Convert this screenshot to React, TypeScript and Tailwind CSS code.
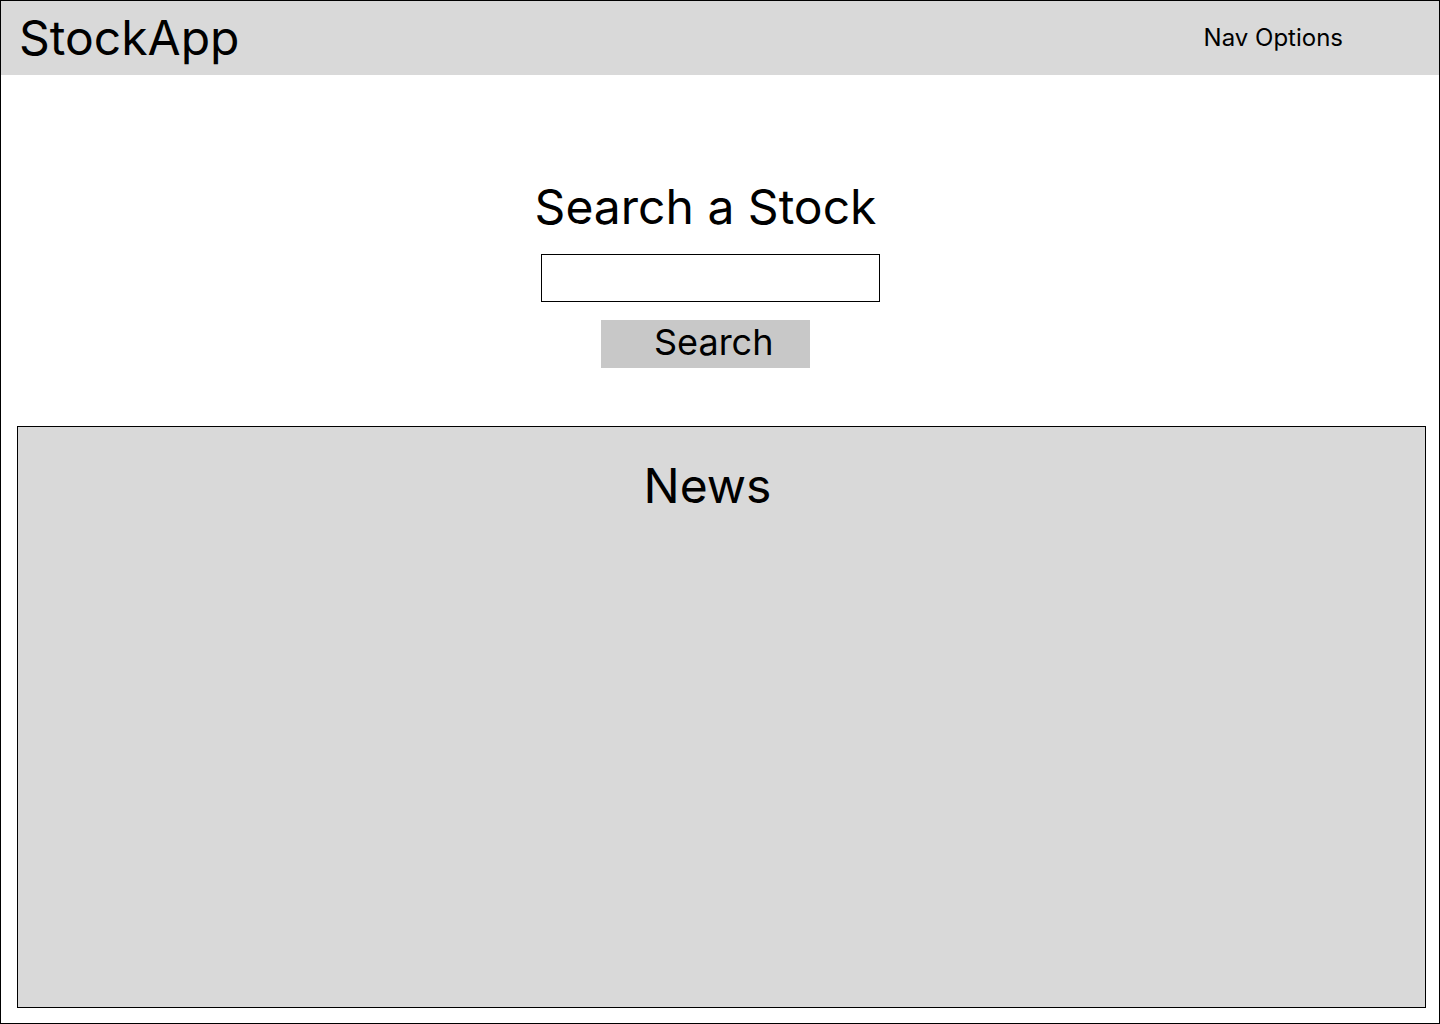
import React from 'react';

const font = { fontFamily: 'Inter, "Noto Sans", sans-serif' };

export default function App() {
    return (
        <div
            className="w-[1440px] h-[1024px] border border-black bg-white flex flex-col text-black"
            style={font}
        >
            {/* Header */}
            <header className="h-[74px] bg-[#d9d9d9] flex items-center justify-between pl-[18px] pr-[96px]">
                <div className="text-[48px] leading-[58px]">StockApp</div>
                <nav className="text-[24px] leading-[29px] pb-[2px]">Nav Options</nav>
            </header>

            {/* Search */}
            <section className="flex flex-col items-center pr-[29px] pt-[103px]">
                <h1 className="text-[48px] leading-[58px] font-normal">Search a Stock</h1>
                <input
                    type="text"
                    aria-label="Stock symbol"
                    className="mt-[18px] ml-[9px] w-[339px] h-[48px] border border-black bg-white outline-none px-2"
                />
                <button className="mt-[18px] w-[209px] h-[48px] bg-[#c8c8c8] text-[36px] leading-[44px] text-left pl-[53px] flex items-start">
                    Search
                </button>
            </section>

            {/* News */}
            <section className="mt-[58px] ml-[16px] w-[1409px] h-[582px] border border-black bg-[#d9d9d9] flex flex-col items-center pr-[28px] pt-[30px]">
                <h2 className="text-[48px] leading-[58px] font-normal">News</h2>
            </section>
        </div>
    );
}
